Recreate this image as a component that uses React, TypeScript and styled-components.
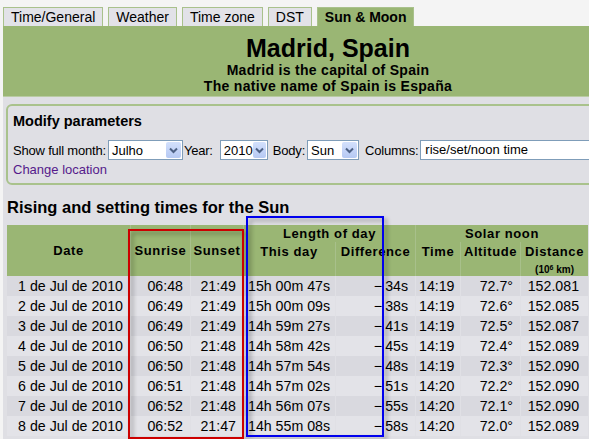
import React from 'react';
import styled, { createGlobalStyle } from 'styled-components';

const GlobalStyle = createGlobalStyle`
  html, body {
    margin: 0;
    padding: 0;
    background: #f4f4f4;
    overflow: hidden;
  }
  body {
    font-family: "Liberation Sans", Arial, sans-serif;
    font-size: 13px;
    color: #000;
  }
`;

const Page = styled.div`
  width: 650px;
  padding: 7px 0 0 3px;
`;

// Tabs
const TabBar = styled.div`
  display: flex;
  gap: 5px;
  height: 19px;
`;

const Tab = styled.div<{ $active?: boolean }>`
  box-sizing: border-box;
  height: 19px;
  padding: 1px 7px 0;
  font-size: 14px;
  line-height: 17px;
  border: 1px solid #a9c18c;
  border-bottom: none;
  background: ${p => (p.$active ? '#9ab674' : '#e2e2e8')};
  font-weight: ${p => (p.$active ? 'bold' : 'normal')};
`;

// Green header
const Header = styled.div`
  background: #9ab674;
  height: 71px;
  text-align: center;
  padding-top: 8px;
  box-sizing: border-box;
  border-bottom: 1px solid #b9cba3;
`;

const Title = styled.h1`
  margin: 0;
  font-size: 25px;
  line-height: 28px;
  font-weight: bold;
`;

const SubTitle = styled.div`
  font-size: 14px;
  font-weight: bold;
  line-height: 16px;
  letter-spacing: 0.3px;
`;

const Body = styled.div`
  background: #dfdfe4;
  padding: 7px 0 8px 3px;
  height: 360px;
`;

// Modify parameters box
const ParamBox = styled.div`
  border: 2px solid #a9c28c;
  border-radius: 6px;
  padding: 6px 5px 4px;
  height: 67px;
  margin-right: -20px;
`;

const ParamTitle = styled.div`
  font-size: 14.5px;
  font-weight: bold;
  line-height: 18px;
  margin-bottom: 10px;
`;

const ParamRow = styled.div`
  display: flex;
  align-items: center;
  height: 20px;
  white-space: nowrap;
`;

const Label = styled.span<{ $ml?: number; $mr?: number }>`
  margin-left: ${p => p.$ml ?? 0}px;
  margin-right: ${p => p.$mr ?? 2}px;
  letter-spacing: -0.2px;
`;

const SelectBox = styled.div<{ $w: number }>`
  box-sizing: border-box;
  width: ${p => p.$w}px;
  height: 20px;
  border: 1px solid #7f9db9;
  background: #fff;
  display: flex;
  align-items: center;
  justify-content: space-between;
  padding: 0 1px 0 3px;
`;

const SelectArrow = styled.span`
  width: 15px;
  height: 16px;
  background: linear-gradient(#d3e0fc, #b6c9f3);
  border-radius: 2px;
  display: flex;
  align-items: center;
  justify-content: center;
`;

const TextInput = styled.div`
  box-sizing: border-box;
  width: 200px;
  height: 20px;
  border: 1px solid #7f9db9;
  background: #fff;
  padding: 1px 4px;
  line-height: 16px;
`;

const Link = styled.a`
  display: block;
  color: #551a8b;
  text-decoration: none;
  margin-top: 2px;
  line-height: 16px;
`;

const Chevron = () => (
  <svg width="9" height="7" viewBox="0 0 9 7">
    <path d="M1 1.5 L4.5 5 L8 1.5" fill="none" stroke="#4d6185" strokeWidth="2" />
  </svg>
);

const Select: React.FC<{ w: number; value: string }> = ({ w, value }) => (
  <SelectBox $w={w}>
    <span>{value}</span>
    <SelectArrow>
      <Chevron />
    </SelectArrow>
  </SelectBox>
);

// Table section
const SectionTitle = styled.h2`
  margin: 13px 0 0 1px;
  font-size: 16.5px;
  line-height: 18px;
  font-weight: bold;
`;

const TableWrap = styled.div`
  position: relative;
  margin-top: 9px;
  margin-left: 1px;
`;

const Table = styled.table`
  table-layout: fixed;
  width: 581px;
  border-collapse: separate;
  border-spacing: 0 0;
  font-size: 14.2px;
`;

const Th = styled.th<{ $top?: boolean }>`
  background: #9ab674;
  font-weight: bold;
  font-size: 13px;
  line-height: 17px;
  letter-spacing: 0.6px;
  padding: ${p => (p.$top ? '1px 0 0' : '0')};
  vertical-align: ${p => (p.$top ? 'top' : 'middle')};
  border-left: 1px solid #a8c08b;
  &:first-child {
    border-left: none;
  }
`;

const Unit = styled.div`
  font-size: 10px;
  line-height: 11px;
  margin-top: 2px;
  letter-spacing: 0;
  sup {
    font-size: 7px;
    vertical-align: 3px;
  }
`;

const Tr = styled.tr<{ $odd: boolean }>`
  height: 20px;
  background: ${p => (p.$odd ? '#d9d9df' : '#e3e3e8')};
`;

const Td = styled.td<{ $align?: string; $pl?: number; $pr?: number }>`
  padding: 0 ${p => p.$pr ?? 7}px 0 ${p => p.$pl ?? 0}px;
  text-align: ${p => p.$align ?? 'right'};
  white-space: nowrap;
  line-height: 20px;
  border-left: 1px solid #e0e0e5;
  &:first-child {
    border-left: none;
  }
`;

const Minus = styled.span`
  margin-right: 3px;
`;

const Frame = styled.div<{ $c: string; $l: number; $t: number; $w: number; $h: number }>`
  position: absolute;
  left: ${p => p.$l}px;
  top: ${p => p.$t}px;
  width: ${p => p.$w}px;
  height: ${p => p.$h}px;
  border: 2px solid ${p => p.$c};
  box-sizing: border-box;
  filter: drop-shadow(3px 3px 2px rgba(0, 0, 0, 0.35));
  pointer-events: none;
`;

const rows = [
  ['1', '06:48', '21:49', '15h 00m 47s', '34s', '14:19', '72.7°', '152.081'],
  ['2', '06:49', '21:49', '15h 00m 09s', '38s', '14:19', '72.6°', '152.085'],
  ['3', '06:49', '21:49', '14h 59m 27s', '41s', '14:19', '72.5°', '152.087'],
  ['4', '06:50', '21:48', '14h 58m 42s', '45s', '14:19', '72.4°', '152.089'],
  ['5', '06:50', '21:48', '14h 57m 54s', '48s', '14:19', '72.3°', '152.090'],
  ['6', '06:51', '21:48', '14h 57m 02s', '51s', '14:20', '72.2°', '152.090'],
  ['7', '06:52', '21:48', '14h 56m 07s', '55s', '14:20', '72.1°', '152.090'],
  ['8', '06:52', '21:47', '14h 55m 08s', '58s', '14:20', '72.0°', '152.089'],
];

const tabs = ['Time/General', 'Weather', 'Time zone', 'DST', 'Sun & Moon'];

export default function App() {
  return (
    <Page>
      <GlobalStyle />
      <TabBar>
        {tabs.map(t => (
          <Tab key={t} $active={t === 'Sun & Moon'}>
            {t}
          </Tab>
        ))}
      </TabBar>
      <Header>
        <Title>Madrid, Spain</Title>
        <SubTitle>Madrid is the capital of Spain</SubTitle>
        <SubTitle>The native name of Spain is España</SubTitle>
      </Header>
      <Body>
        <ParamBox>
          <ParamTitle>Modify parameters</ParamTitle>
          <ParamRow>
            <Label>Show full month:</Label>
            <Select w={75} value="Julho" />
            <Label $ml={1} $mr={7}>Year:</Label>
            <Select w={48} value="2010" />
            <Label $ml={5} $mr={2}>Body:</Label>
            <Select w={52} value="Sun" />
            <Label $ml={6} $mr={2}>Columns:</Label>
            <TextInput>rise/set/noon time</TextInput>
          </ParamRow>
          <Link href="#">Change location</Link>
        </ParamBox>
        <SectionTitle>Rising and setting times for the Sun</SectionTitle>
        <TableWrap>
          <Table>
            <colgroup>
              <col style={{ width: 123 }} />
              <col style={{ width: 60 }} />
              <col style={{ width: 53 }} />
              <col style={{ width: 92 }} />
              <col style={{ width: 80 }} />
              <col style={{ width: 45 }} />
              <col style={{ width: 60 }} />
              <col style={{ width: 68 }} />
            </colgroup>
            <thead>
              <tr style={{ height: 17 }}>
                <Th rowSpan={2}>Date</Th>
                <Th rowSpan={2}>Sunrise</Th>
                <Th rowSpan={2}>Sunset</Th>
                <Th colSpan={2}>Length of day</Th>
                <Th colSpan={3}>Solar noon</Th>
              </tr>
              <tr style={{ height: 34 }}>
                <Th $top>This day</Th>
                <Th $top>Difference</Th>
                <Th $top>Time</Th>
                <Th $top>Altitude</Th>
                <Th $top>
                  Distance
                  <Unit>
                    (10<sup>6</sup> km)
                  </Unit>
                </Th>
              </tr>
            </thead>
            <tbody>
              {rows.map((r, i) => (
                <Tr key={r[0]} $odd={i % 2 === 0}>
                  <Td>{r[0]} de Jul de 2010</Td>
                  <Td>{r[1]}</Td>
                  <Td>{r[2]}</Td>
                  <Td $align="left" $pl={4} $pr={0}>
                    {r[3]}
                  </Td>
                  <Td>
                    <Minus>−</Minus>
                    {r[4]}
                  </Td>
                  <Td $align="left" $pl={3} $pr={0}>
                    {r[5]}
                  </Td>
                  <Td>{r[6]}</Td>
                  <Td $pr={9}>{r[7]}</Td>
                </Tr>
              ))}
            </tbody>
          </Table>
          <Frame $c="#cc0000" $l={121} $t={4} $w={116} $h={210} />
          <Frame $c="#0000ee" $l={239} $t={-9} $w={138} $h={221} />
        </TableWrap>
      </Body>
    </Page>
  );
}
